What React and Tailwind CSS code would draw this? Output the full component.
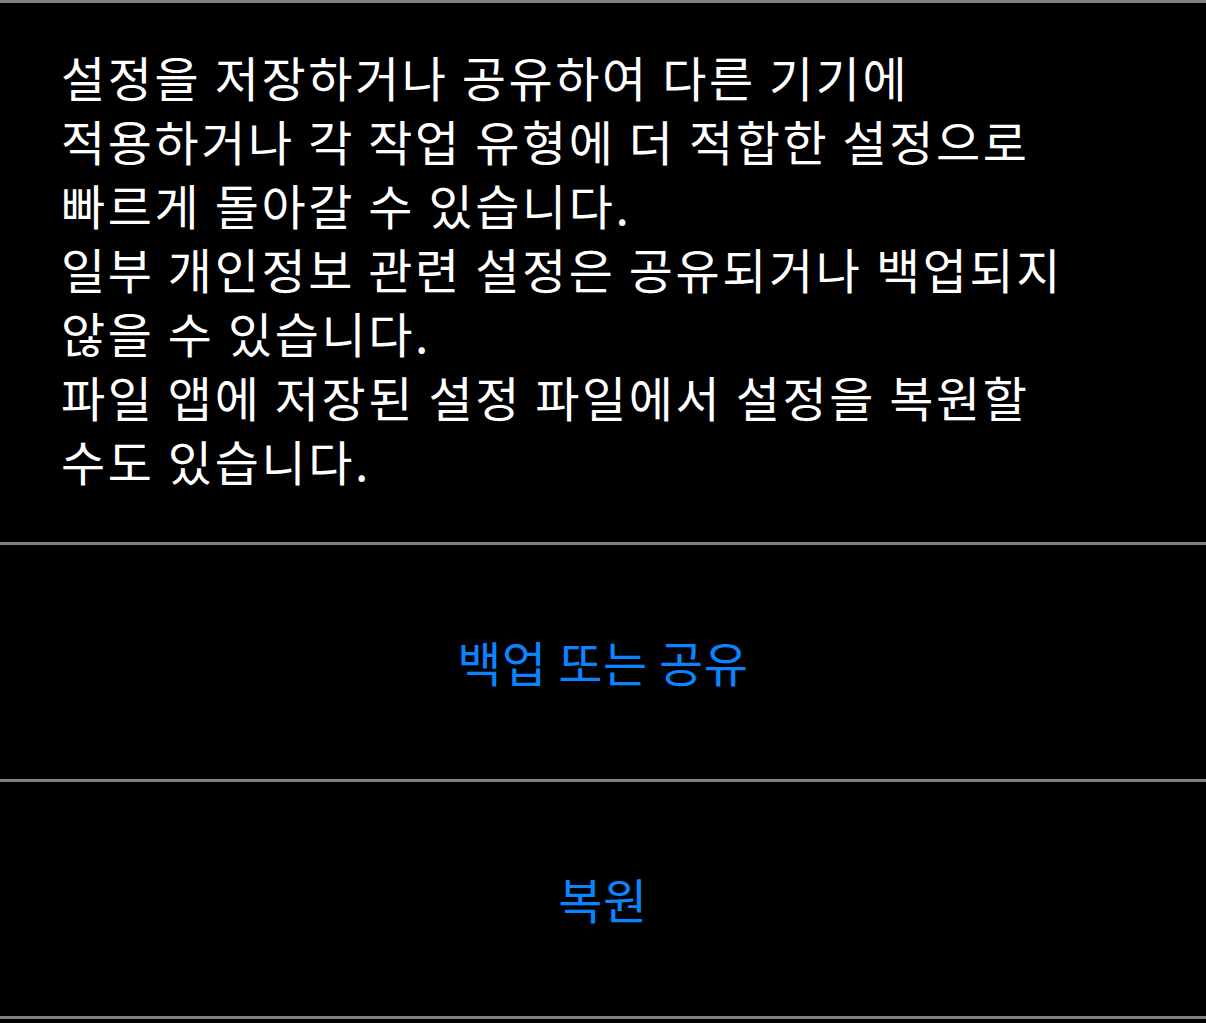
const lines = [
  '설정을 저장하거나 공유하여 다른 기기에',
  '적용하거나 각 작업 유형에 더 적합한 설정으로',
  '빠르게 돌아갈 수 있습니다.',
  '일부 개인정보 관련 설정은 공유되거나 백업되지',
  '않을 수 있습니다.',
  '파일 앱에 저장된 설정 파일에서 설정을 복원할',
  '수도 있습니다.',
]

const actions = ['백업 또는 공유', '복원']

export default function App() {
  return (
    <div
      className="w-[1206px] h-[1023px] bg-black overflow-hidden"
      style={{ fontFamily: '"Noto Sans CJK KR", "Noto Sans", sans-serif' }}
    >
      <div className="border-t-[3px] border-b-[3px] border-[#808080]">
        <div className="pl-[61px] pt-[41px] pb-[50px] text-white text-[48px] leading-[64px] tracking-[2.6px]">
          {lines.map((l) => (
            <div key={l} className="whitespace-nowrap">{l}</div>
          ))}
        </div>
      </div>
      {actions.map((a) => (
        <div
          key={a}
          className="h-[237px] flex items-center justify-center border-b-[3px] border-[#808080] text-[#0a84ff] text-[48px] tracking-[0.6px]"
        >
          <span className="-mt-[2px]">{a}</span>
        </div>
      ))}
    </div>
  )
}
